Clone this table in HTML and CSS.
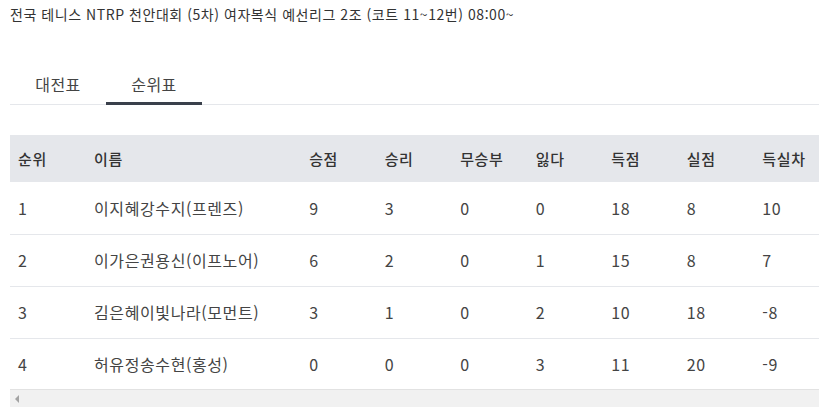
FILE: index.html
```html
<!DOCTYPE html>
<html lang="ko">
<head>
    <meta charset="UTF-8">
    <title>순위표</title>
    <link rel="stylesheet" href="styles.css">
</head>
<body>
<div class="page">
    <div class="title">전국 테니스 NTRP 천안대회 (5차) 여자복식 예선리그 2조 (코트 11~12번) 08:00~</div>

    <div class="tabs">
        <span class="tab">대전표</span>
        <span class="tab active">순위표</span>
    </div>

    <div class="table-wrap">
        <table class="rank">
            <colgroup>
                <col class="c-rank">
                <col class="c-name">
                <col class="c-num"><col class="c-num"><col class="c-num"><col class="c-num">
                <col class="c-num"><col class="c-num"><col class="c-num">
            </colgroup>
            <thead>
            <tr>
                <th>순위</th>
                <th>이름</th>
                <th>승점</th>
                <th>승리</th>
                <th>무승부</th>
                <th>잃다</th>
                <th>득점</th>
                <th>실점</th>
                <th>득실차</th>
            </tr>
            </thead>
            <tbody>
            <tr>
                <td>1</td><td>이지혜강수지(프렌즈)</td><td>9</td><td>3</td><td>0</td><td>0</td><td>18</td><td>8</td><td>10</td>
            </tr>
            <tr>
                <td>2</td><td>이가은권용신(이프노어)</td><td>6</td><td>2</td><td>0</td><td>1</td><td>15</td><td>8</td><td>7</td>
            </tr>
            <tr>
                <td>3</td><td>김은혜이빛나라(모먼트)</td><td>3</td><td>1</td><td>0</td><td>2</td><td>10</td><td>18</td><td>-8</td>
            </tr>
            <tr>
                <td>4</td><td>허유정송수현(홍성)</td><td>0</td><td>0</td><td>0</td><td>3</td><td>11</td><td>20</td><td>-9</td>
            </tr>
            </tbody>
        </table>
        <!--가로 스크롤바-->
        <div class="scrollbar"><span class="arrow"></span></div>
    </div>
</div>
</body>
</html>
```

FILE: styles.css
```css
* {
    margin: 0;
    padding: 0;
    box-sizing: border-box;
}

body {
    font-family: "Noto Sans CJK KR", "Noto Sans", sans-serif;
    color: #333;
    background: #fff;
    overflow: hidden;
}

.page {
    padding: 5px 0 0 10px;
    width: 840px;
}

.title {
    font-size: 14px;
    line-height: 18px;
    letter-spacing: 0.55px;
    color: #333;
}

.tabs {
    display: flex;
    margin-top: 46px;
    border-bottom: 1px solid #e5e7eb;
    width: 809px;
}

.tab {
    width: 96px;
    height: 36px;
    line-height: 30px;
    text-align: center;
    font-size: 16px;
    letter-spacing: 0.5px;
    color: #444;
    border-bottom: 3px solid transparent;
    margin-bottom: -1px;
}

.tab.active {
    border-bottom-color: #3a404b;
}

.table-wrap {
    margin-top: 30px;
    width: 830px;
    overflow: hidden;
}

.rank {
    border-collapse: collapse;
    table-layout: fixed;
    width: 820px;
    font-size: 16px;
    letter-spacing: 0.6px;
}

.c-rank { width: 76px; }
.c-name { width: 215px; }
.c-num { width: 75.5px; }

.rank th {
    background: #e5e7eb;
    height: 47px;
    text-align: left;
    font-weight: 500;
    font-size: 15px;
    padding: 0 8px;
    color: #333;
}

.rank td {
    height: 52px;
    padding: 0 8px;
    text-align: left;
    color: #444;
    border-bottom: 1px solid #e5e7eb;
}

.rank tbody tr:last-child td {
    height: 51px;
    border-bottom: none;
}

.scrollbar {
    height: 18px;
    background: #f1f1f1;
    border-top: 1px solid #e2e2e2;
    display: flex;
    align-items: center;
    padding-left: 5px;
}

.arrow {
    width: 0;
    height: 0;
    border-top: 4px solid transparent;
    border-bottom: 4px solid transparent;
    border-right: 4px solid #a3a3a3;
}
```
